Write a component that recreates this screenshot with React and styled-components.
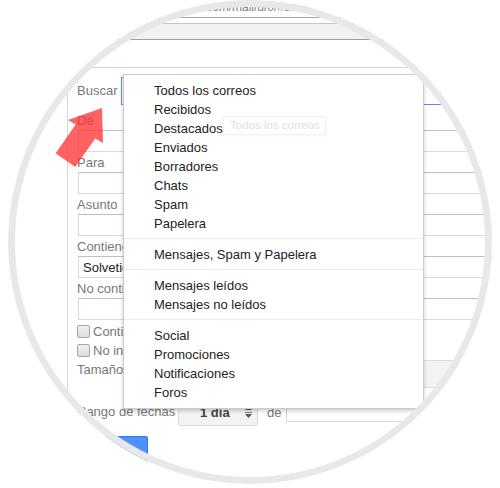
import React from 'react';
import styled, { createGlobalStyle } from 'styled-components';

const GlobalStyle = createGlobalStyle`
  html, body { margin: 0; padding: 0; background: #fff; }
  body {
    font-family: "Liberation Sans", Arial, sans-serif;
    font-size: 13px;
    color: #222;
  }
`;

const Page = styled.div`
  width: 500px;
  height: 488px;
  overflow: hidden;
  padding-left: 8px;
  box-sizing: border-box;
`;

const Lens = styled.div`
  position: relative;
  width: 484px;
  height: 484px;
  border-radius: 50%;
  overflow: hidden;
  background: #fff;
  &::after {
    content: '';
    position: absolute;
    inset: 0;
    border-radius: 50%;
    border: 7px solid #e8e8e8;
    pointer-events: none;
    z-index: 10;
  }
`;

const TopBar = styled.div`
  height: 17px;
  border-bottom: 1px solid #a3a3a3;
  padding-left: 198px;
  font-size: 12px;
  line-height: 14px;
  color: #7a7a7a;
  white-space: nowrap;
`;

const Toolbar = styled.div`
  margin-top: 5px;
  height: 15px;
  background: #f1f1f1;
  border-top: 1px solid #c6c6c6;
  border-bottom: 1px solid #9e9e9e;
`;

const Panel = styled.div`
  position: relative;
  margin: 27px 0 0 59px;
  height: 420px;
  border-top: 1px solid #d6d6d6;
  border-left: 1px solid #d6d6d6;
  padding: 9px 0 0 10px;
`;

const SearchRow = styled.div`
  display: flex;
  align-items: center;
  height: 28px;
`;

const Label = styled.div`
  color: #777;
  margin-left: -1px;
  width: ${p => p.$w || 'auto'};
  flex-shrink: 0;
  line-height: 18px;
  white-space: nowrap;
`;

const FocusSelect = styled.div`
  width: 320px;
  height: 28px;
  box-sizing: border-box;
  border: 1px solid #4d90fe;
`;

const Field = styled.div`
  margin-top: ${p => (p.$first ? '7px' : '2px')};
`;

const TextInput = styled.input`
  display: block;
  width: 100%;
  height: 22px;
  box-sizing: border-box;
  border: 1px solid #d9d9d9;
  border-top-color: #c0c0c0;
  padding: 0 4px;
  margin: 0;
  font: inherit;
  color: #222;
  background: #fff;
  outline: none;
`;

const CheckRow = styled.div`
  display: flex;
  align-items: center;
  gap: 3px;
  height: 19px;
  margin-top: ${p => (p.$first ? '2px' : '0')};
  margin-left: -1px;
  color: #777;
  white-space: nowrap;
`;

const Check = styled.span`
  width: 13px;
  height: 13px;
  box-sizing: border-box;
  border: 1px solid #a6a6a6;
  border-radius: 2px;
  background: linear-gradient(#f0f0f0, #dcdcdc);
`;

const SizeRow = styled.div`
  display: flex;
  height: 28px;
  ${Label} { line-height: 20px; }
`;

const GraySelect = styled.div`
  height: 28px;
  width: ${p => p.$w};
  margin-left: ${p => p.$ml || '0'};
  box-sizing: border-box;
  background: #f3f3f3;
  border: 1px solid #dcdcdc;
  border-radius: 2px;
  flex-shrink: 0;
`;

const SmallInput = styled.div`
  width: ${p => p.$w};
  height: ${p => p.$h || '28px'};
  margin-left: ${p => p.$ml || '0'};
  box-sizing: border-box;
  border: 1px solid #d9d9d9;
  border-top-color: #c0c0c0;
  flex-shrink: 0;
`;

const DateRow = styled.div`
  display: flex;
  align-items: center;
  height: 28px;
  margin-top: 10px;
`;

const DateSelect = styled.div`
  display: flex;
  align-items: center;
  justify-content: space-between;
  width: 80px;
  height: 28px;
  box-sizing: border-box;
  padding: 0 5px 0 21px;
  background: #f3f3f3;
  border: 1px solid #dcdcdc;
  border-radius: 2px;
  font-weight: bold;
  color: #444;
  flex-shrink: 0;
`;

const DeLabel = styled.span`
  color: #777;
  margin-left: 9px;
`;

const SearchButton = styled.div`
  margin-top: 10px;
  width: 70px;
  height: 29px;
  box-sizing: border-box;
  background: #4d90fe;
  border: 1px solid #3079ed;
  border-radius: 2px;
`;

const Menu = styled.div`
  position: absolute;
  left: 55px;
  top: 6px;
  width: 301px;
  box-sizing: border-box;
  padding: 6px 0;
  background: #fff;
  border: 1px solid rgba(0, 0, 0, 0.2);
  box-shadow: 0 2px 4px rgba(0, 0, 0, 0.2);
  z-index: 2;
`;

const MenuItem = styled.div`
  line-height: 19px;
  padding-left: 30px;
  color: #222;
  white-space: nowrap;
`;

const MenuSep = styled.div`
  height: 1px;
  background: #ebebeb;
  margin: 5px 0 6px;
`;

const Tooltip = styled.div`
  position: absolute;
  left: 155px;
  top: 48px;
  padding: 0 5px 0 6px;
  line-height: 17px;
  font-size: 11.5px;
  color: #e0e0e0;
  background: #fff;
  border: 1px solid #f1f1f1;
  box-shadow: 0 1px 2px rgba(0, 0, 0, 0.04);
  white-space: nowrap;
  z-index: 3;
`;

const Pointer = styled.svg`
  position: absolute;
  left: -8px;
  top: 0;
  pointer-events: none;
  z-index: 4;
`;

const groups = [
  ['Todos los correos', 'Recibidos', 'Destacados', 'Enviados', 'Borradores', 'Chats', 'Spam', 'Papelera'],
  ['Mensajes, Spam y Papelera'],
  ['Mensajes leídos', 'Mensajes no leídos'],
  ['Social', 'Promociones', 'Notificaciones', 'Foros'],
];

const fields = [
  { label: 'De' },
  { label: 'Para' },
  { label: 'Asunto' },
  { label: 'Contiene las palabras', value: 'Solvetic' },
  { label: 'No contiene' },
];

const Spinner = () => (
  <svg width="7" height="12" viewBox="0 0 7 12">
    <path d="M3.5 0 L7 4 L0 4 Z M0 6 L7 6 L7 6.8 L0 6.8 Z M0 8 L7 8 L3.5 12 Z" fill="#555" />
  </svg>
);

export default function App() {
  return (
    <Page>
      <GlobalStyle />
      <Lens>
        <TopBar>com/mail/u/0/#search</TopBar>
        <Toolbar />
        <Panel>
          <SearchRow>
            <Label $w="44px">Buscar</Label>
            <FocusSelect />
          </SearchRow>
          {fields.map((f, i) => (
            <Field key={f.label} $first={i === 0}>
              <Label>{f.label}</Label>
              <TextInput readOnly value={f.value || ''} />
            </Field>
          ))}
          <CheckRow $first>
            <Check />
            Contiene archivos adjuntos
          </CheckRow>
          <CheckRow>
            <Check />
            No incluir chats
          </CheckRow>
          <SizeRow>
            <Label $w="100px">Tamaño</Label>
            <GraySelect $w="120px" />
            <SmallInput $w="94px" $ml="8px" />
            <GraySelect $w="80px" $ml="8px" />
          </SizeRow>
          <DateRow>
            <Label $w="101px">Rango de fechas</Label>
            <DateSelect>
              1 día
              <Spinner />
            </DateSelect>
            <DeLabel>de</DeLabel>
            <SmallInput $w="200px" $h="20px" $ml="5px" />
          </DateRow>
          <SearchButton />

          <Menu>
            {groups.map((g, gi) => (
              <React.Fragment key={gi}>
                {gi > 0 && <MenuSep />}
                {g.map(item => (
                  <MenuItem key={item}>{item}</MenuItem>
                ))}
              </React.Fragment>
            ))}
          </Menu>
          <Tooltip>Todos los correos</Tooltip>
        </Panel>
        <Pointer width="500" height="488" viewBox="0 0 500 488">
          <polygon
            points="102,108 103,143 95.3,138.4 75.2,167.1 55.6,153.3 75.7,124.6 68,120"
            fill="rgba(255, 45, 45, 0.75)"
          />
        </Pointer>
      </Lens>
    </Page>
  );
}
